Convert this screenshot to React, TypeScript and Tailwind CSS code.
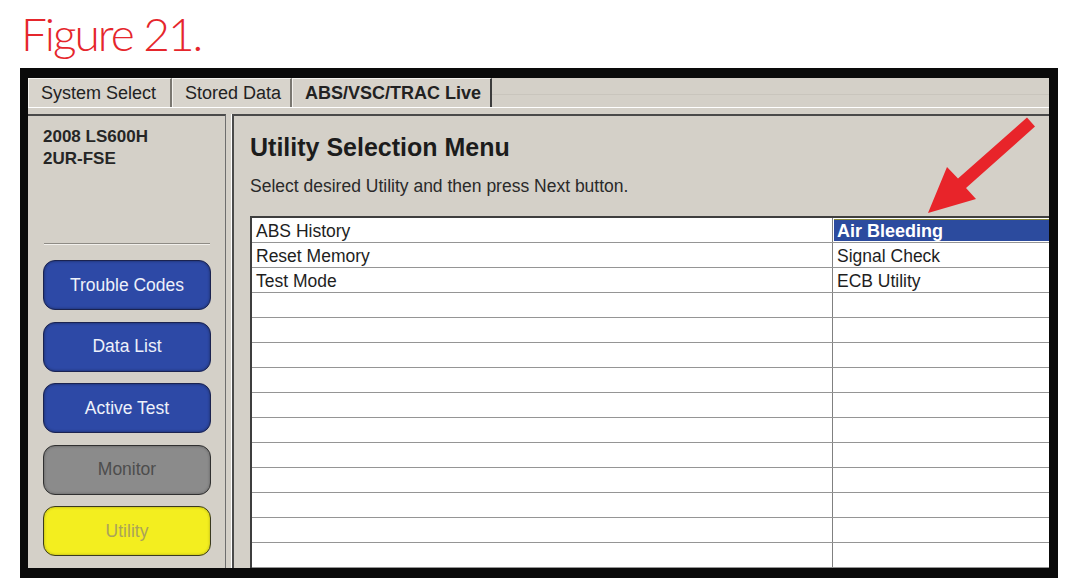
import React from "react"

type navButtonProps = {
    label: string
    variant: "blue" | "gray" | "yellow"
}

type rowProps = {
    left: string
    right: string
    selected?: boolean
}

const rows: rowProps[] = [
    { left: "ABS History", right: "Air Bleeding", selected: true },
    { left: "Reset Memory", right: "Signal Check" },
    { left: "Test Mode", right: "ECB Utility" },
    ...Array.from({ length: 11 }, () => ({ left: "", right: "" })),
]

const NavButton: React.FC<navButtonProps> = ({ label, variant }) => {
    const look =
        variant === "blue"
            ? "bg-[#2d49a6] text-[#eef1fa] border-[#1b2350] shadow-[inset_0_0_3px_rgba(0,0,0,0.45)]"
            : variant === "gray"
            ? "bg-[#8b8b8b] text-[#4d4d4d] border-[#303030] shadow-[inset_0_0_3px_rgba(0,0,0,0.35)]"
            : "bg-[#f3ee1f] text-[#aaa35a] border-[#3a3a20] shadow-[inset_0_0_3px_rgba(0,0,0,0.3)]"
    return (
        <div className={`flex items-center justify-center h-[50px] w-[168px] rounded-[12px] border-[1.5px] text-[17.5px] ${look}`}>
            {label}
        </div>
    )
}

const Tab: React.FC<{ label: string; width: string; active?: boolean }> = ({ label, width, active }) => {
    return (
        <div
            className={`h-full flex items-center pl-[12px] border-t border-l border-t-[#f4f2ee] border-l-[#f4f2ee] border-r-2 ${width} ${
                active ? "font-bold border-r-[#3c3c3c] bg-[#d6d2ca]" : "border-r-[#7a7770] bg-[#d8d4cc]"
            }`}
        >
            <span className="text-[18px] text-[#222]">{label}</span>
        </div>
    )
}

const App = () => {
    return (
        <div className="relative w-[1084px] h-[588px] bg-white overflow-hidden" style={{ fontFamily: '"Liberation Sans", Arial, sans-serif' }}>
            <div className="h-[68px] pl-[21px] pt-[9px]">
                <h1 className="text-[46px] leading-[50px] font-light text-[#e5262c] tracking-[-2px]" style={{ fontFamily: 'Lato, "Open Sans", sans-serif' }}>
                    Figure 21.
                </h1>
            </div>

            <div className="ml-[20px] w-[1038px] h-[510px] bg-[#0a0a0a] pt-[10px] pl-[8px] pr-[9px] pb-[10px]">
                <div className="flex flex-col h-full bg-[#d4d0c8]">
                    {/* tabs */}
                    <div className="flex h-[30px] border-b border-white">
                        <Tab label="System Select" width="w-[144px]" />
                        <Tab label="Stored Data" width="w-[120px]" />
                        <Tab label="ABS/VSC/TRAC Live" width="w-[200px]" active />
                        <div className="flex-1 flex flex-col justify-center">
                            <div className="h-px bg-[#c9c5bd] mt-[4px]" />
                        </div>
                    </div>

                    <div className="flex flex-1 min-h-0 pt-[6px]">
                        {/* left side */}
                        <div className="w-[198px] border-t-2 border-r border-t-[#4a4a4a] border-r-[#6e6e6e] flex flex-col">
                            <div className="pl-[15px] pt-[10px] font-bold text-[17px] leading-[22px] text-[#262626]">
                                <div>2008 LS600H</div>
                                <div>2UR-FSE</div>
                            </div>
                            <div className="ml-[16px] mt-[73px] w-[166px] h-[2px] border-t border-b border-t-[#8e8b85] border-b-[#f2f0ec]" />
                            <div className="flex flex-col gap-[11.5px] pl-[15px] mt-[15px]">
                                <NavButton label="Trouble Codes" variant="blue" />
                                <NavButton label="Data List" variant="blue" />
                                <NavButton label="Active Test" variant="blue" />
                                <NavButton label="Monitor" variant="gray" />
                                <NavButton label="Utility" variant="yellow" />
                            </div>
                        </div>
                        <div className="w-[6px] border-r border-white" />

                        {/* main */}
                        <div className="flex-1 min-w-0 flex flex-col border-t-2 border-l-2 border-[#4a4a4a] pl-[16px]">
                            <h2 className="mt-[16px] text-[25px] leading-[30px] font-bold text-[#1c1c1c]">Utility Selection Menu</h2>
                            <p className="mt-[13px] text-[17.5px] leading-[22px] text-[#2a2a2a]">Select desired Utility and then press Next button.</p>
                            <div className="mt-[19px] flex-1 min-h-0 overflow-hidden bg-white border-t-2 border-l-2 border-[#3e3e3e]">
                                <div className="w-[900px]">
                                    {rows.map((row, i) => (
                                        <div key={i} className="flex h-[25px] border-b border-[#959595] text-[17.5px] leading-[22px] text-[#1e1e1e]">
                                            <div className="w-[581px] border-r border-[#808080] pl-[4px] pt-[2px]">{row.left}</div>
                                            <div className="flex-1 pt-[1px] pl-[1px]">
                                                {row.selected ? (
                                                    <div className="h-[22px] bg-[#2c4b9e] text-white font-bold text-[18px] leading-[23px] pl-[3px] border-t border-[#8a8a3a]">
                                                        {row.right}
                                                    </div>
                                                ) : (
                                                    <div className="pl-[3px] pt-[1px]">{row.right}</div>
                                                )}
                                            </div>
                                        </div>
                                    ))}
                                </div>
                            </div>
                        </div>
                    </div>
                </div>
            </div>

            {/* callout arrow */}
            <svg className="absolute left-0 top-0 pointer-events-none" width="1084" height="588" viewBox="0 0 1084 588">
                <polygon
                    points="1027,117.5 1035,126.5 966,188 976,199 928,213 947,167 958,178.5"
                    fill="#e8242a"
                />
            </svg>
        </div>
    )
}

export default App
